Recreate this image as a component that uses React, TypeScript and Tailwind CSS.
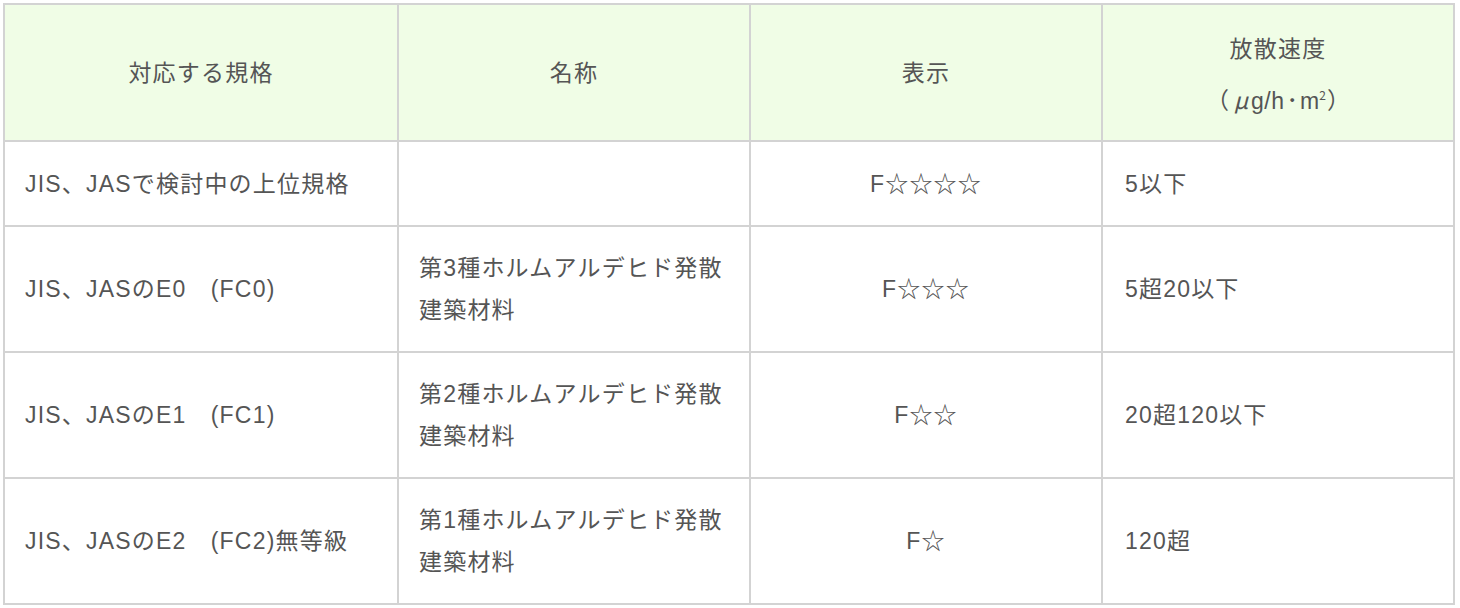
import React from "react";

const rows: { std: string; name: string[]; mark: string; rate: string }[] = [
  { std: "JIS、JASで検討中の上位規格", name: [], mark: "F☆☆☆☆", rate: "5以下" },
  { std: "JIS、JASのE0\u3000(FC0)", name: ["第3種ホルムアルデヒド発散", "建築材料"], mark: "F☆☆☆", rate: "5超20以下" },
  { std: "JIS、JASのE1\u3000(FC1)", name: ["第2種ホルムアルデヒド発散", "建築材料"], mark: "F☆☆", rate: "20超120以下" },
  { std: "JIS、JASのE2\u3000(FC2)無等級", name: ["第1種ホルムアルデヒド発散", "建築材料"], mark: "F☆", rate: "120超" },
];

export default function App() {
  return (
    <div
      className="bg-white w-[1460px] h-[608px] pt-[3px] pl-[3px] text-[#555555] text-[23px] leading-[42px] tracking-[1.2px]"
      style={{ fontFamily: '"Liberation Sans", "Noto Sans CJK JP", sans-serif' }}
    >
      <table className="table-fixed border-collapse w-[1450px]">
        <colgroup>
          <col className="w-[394px]" />
          <col className="w-[352px]" />
          <col className="w-[352px]" />
          <col className="w-[352px]" />
        </colgroup>
        <thead>
          <tr className="bg-[#f0fde6] h-[137px]">
            <th className="border-2 border-[#d3d3d3] font-normal text-center align-middle">対応する規格</th>
            <th className="border-2 border-[#d3d3d3] font-normal text-center align-middle">名称</th>
            <th className="border-2 border-[#d3d3d3] font-normal text-center align-middle">表示</th>
            <th className="border-2 border-[#d3d3d3] font-normal text-center align-middle leading-[50px] pt-[2px]">
              <div className="h-[50px]">放散速度</div>
              <div className="h-[50px] tracking-normal" style={{ fontFamily: '"Noto Sans CJK JP", sans-serif' }}>
                （<span className="inline-block w-[22px] pl-[2px] italic">μ</span>
                <span className="tracking-[0.5px]" style={{ fontFamily: '"Liberation Sans", sans-serif' }}>g/h</span>
                <span className="mx-[2px]">･</span>
                <span style={{ fontFamily: '"Liberation Sans", sans-serif' }}>m</span>
                <span className="text-[12px] leading-none align-[9px] mr-[1px]">2</span>）
              </div>
            </th>
          </tr>
        </thead>
        <tbody>
          {rows.map((r, i) => (
            <tr key={i} className={i === 0 ? "h-[85px]" : "h-[126px]"}>
              <td className="border-2 border-[#d3d3d3] px-[20px] align-middle whitespace-pre">{r.std}</td>
              <td className="border-2 border-[#d3d3d3] px-[20px] align-middle">
                {r.name.map((n, j) => (
                  <div key={j}>{n}</div>
                ))}
              </td>
              <td className="border-2 border-[#d3d3d3] px-[20px] align-middle text-center">{r.mark}</td>
              <td className="border-2 border-[#d3d3d3] px-[22px] align-middle">{r.rate}</td>
            </tr>
          ))}
        </tbody>
      </table>
    </div>
  );
}
